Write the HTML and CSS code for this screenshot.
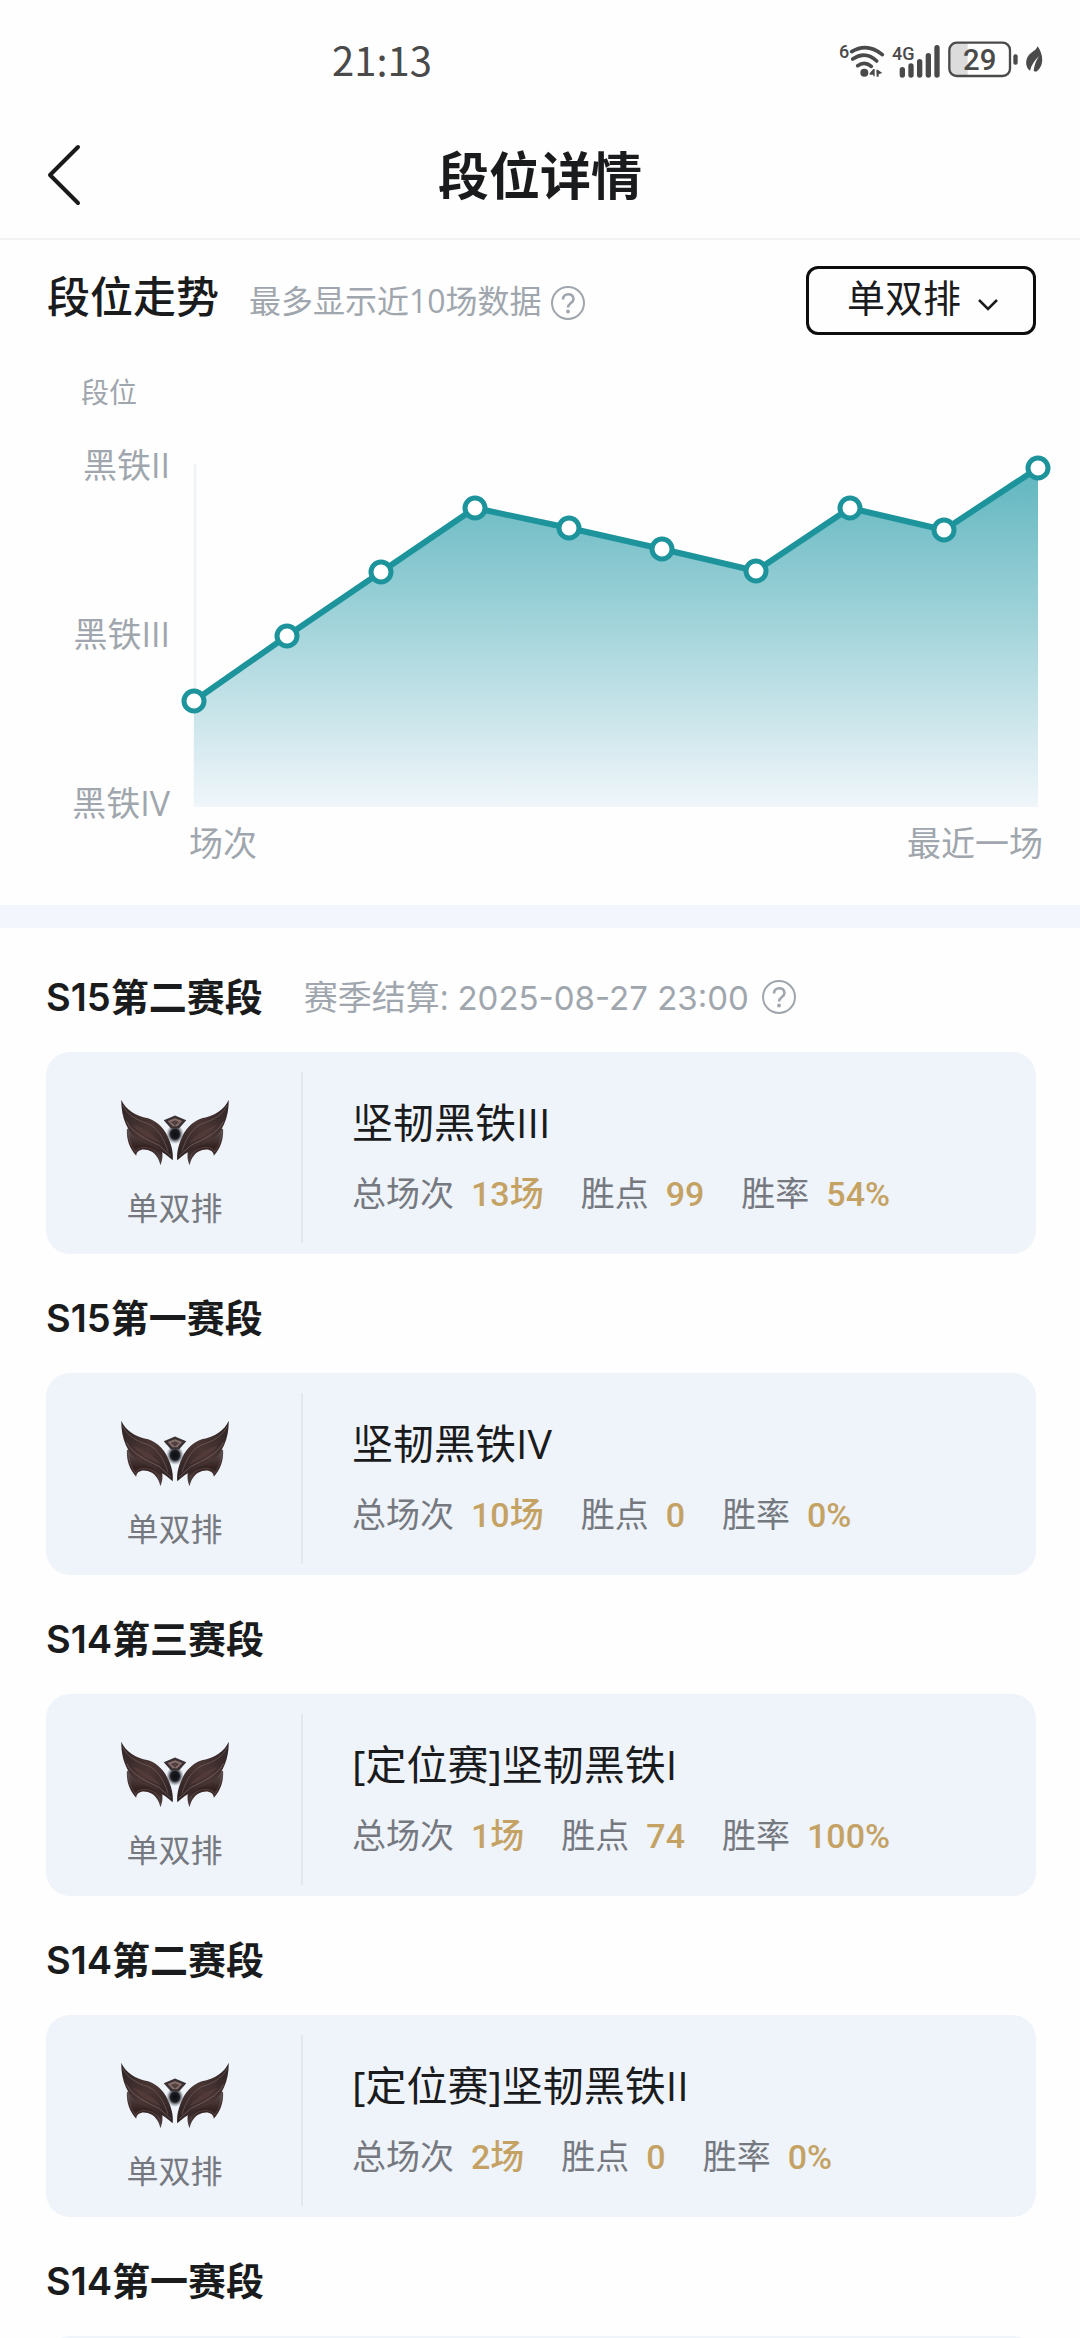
FILE: index.html
```html
<!DOCTYPE html>
<html lang="zh-CN">

<head>
  <meta charset="UTF-8">
  <meta name="viewport" content="width=device-width, initial-scale=1.0">
  <title>段位详情</title>
  <link rel="stylesheet" href="styles.css">
</head>

<body>
  <!-- shared shapes -->
  <svg class="defs" width="0" height="0" aria-hidden="true">
    <defs>
      <linearGradient id="blade" x1="0" y1="0" x2="1" y2="1">
        <stop offset="0" stop-color="#2c2324" />
        <stop offset="0.5" stop-color="#4a3634" />
        <stop offset="1" stop-color="#2b2021" />
      </linearGradient>
      <linearGradient id="feather" x1="0" y1="0" x2="0" y2="1">
        <stop offset="0" stop-color="#5d5152" />
        <stop offset="0.5" stop-color="#33211f" />
        <stop offset="1" stop-color="#54474a" />
      </linearGradient>
      <radialGradient id="core">
        <stop offset="0" stop-color="#0c0d11" />
        <stop offset="0.5" stop-color="#1c1d23" />
        <stop offset="1" stop-color="#8d8f98" stop-opacity="0" />
      </radialGradient>
    </defs>
    <symbol id="wing" viewBox="0 0 450 330" overflow="visible">
      <path d="M79 146C77 180 88 206 107 227C108 211 124 205 142 210C162 216 175 232 180 256C189 236 187 216 182 200L120 150Z" fill="url(#feather)" />
      <path d="M84 158C86 184 94 202 105 216C110 204 126 199 146 204C162 208 172 217 178 230" fill="none" stroke="#81696a" stroke-width="2" opacity="0.6" />
      <path d="M62 58C75 88 104 106 143 114C174 124 196 150 207 180C216 204 219 222 217 241C190 214 152 200 118 182C82 160 61 112 62 58Z" fill="url(#blade)" />
      <path d="M66 74C78 102 108 120 142 130C170 142 190 172 203 214" fill="none" stroke="#7d6764" stroke-width="3" opacity="0.6" />
      <path d="M78 124C96 160 140 178 176 196L212 228" fill="none" stroke="#8a7371" stroke-width="3" opacity="0.6" />
      <path d="M96 134C126 142 154 158 182 190C152 176 122 166 96 134Z" fill="#513a37" />
    </symbol>
    <symbol id="emblem" viewBox="60 56 328 202">
      <use href="#wing" width="450" height="330" />
      <use href="#wing" width="450" height="330" transform="translate(448 0) scale(-1 1)" />
      <ellipse cx="224" cy="162" rx="27" ry="30" fill="url(#core)" />
      <path d="M190 120L224 106L258 120L236 145H212Z" fill="#393132" />
      <path d="M202 122L224 114L246 122L231 138H217Z" fill="#8a706d" />
      <path d="M211 125L224 120L237 125L224 137Z" fill="#514040" />
    </symbol>
    <symbol id="help" viewBox="0 0 36 36">
      <circle cx="18" cy="18" r="16" fill="none" stroke="currentColor" stroke-width="2" />
      <path d="M13 14.500C13 7.500 23.500 7.500 23.500 14C23.500 18 18 18 18 22.500" fill="none" stroke="currentColor" stroke-width="2.600" />
      <circle cx="18" cy="26.500" r="1.900" fill="currentColor" />
    </symbol>
  </svg>

  <div class="page">
    <div class="status_bar">
      <span class="time">21:13</span>
      <div class="status_icons">
        <svg width="46" height="40" viewBox="110 50 138 120">
          <text x="110" y="108" class="status_mini">6</text>
          <g fill="none" stroke="#4a4a4a" stroke-width="11" stroke-linecap="round">
            <path d="M148 88Q195 60 240 97" />
            <path d="M151 110Q189 84 223 116" />
            <path d="M166 130Q187 115 207 132" />
          </g>
          <circle cx="186" cy="151" r="12" fill="#4a4a4a" />
          <path d="M202 153L213 140H217V162H213V157H202ZM222 142H226L240 152L229 156V163H223Z" fill="#4a4a4a" />
        </svg>
        <svg width="49" height="40" viewBox="273 50 147 120">
          <text x="273" y="112" class="status_mini">4G</text>
          <path d="M304 142V158M330 131V158M356 118V158M382 100V158M408 76V158" fill="none" stroke="#4a4a4a" stroke-width="16" stroke-linecap="round" />
        </svg>
        <svg width="71" height="40" viewBox="449 55 213 120">
          <path d="M473 67H508V165H473Q454 165 454 146V86Q454 67 473 67Z" fill="#dcdcdc" />
          <rect x="453" y="66" width="182" height="100" rx="22" fill="none" stroke="#4a4a4a" stroke-width="7" />
          <rect x="645" y="101" width="13" height="31" rx="6" fill="#4a4a4a" />
          <text x="544" y="149" text-anchor="middle" class="status_charge">29</text>
        </svg>
        <svg width="17" height="40" viewBox="676 55 51 120">
          <path d="M711 77C730 104 730 138 706 153L699 151C701 133 706 120 715 107C702 119 693 132 688 150C671 139 673 109 692 96C702 90 708 85 711 77Z" fill="#4a4a4a" />
        </svg>
      </div>
    </div>

    <header class="header">
      <button class="back" type="button" aria-label="返回">
        <svg width="36" height="64" viewBox="0 0 36 64">
          <path d="M32 4L4 32L32 60" fill="none" stroke="#1a1a1a" stroke-width="4" stroke-linecap="round" stroke-linejoin="round" />
        </svg>
      </button>
      <h1>段位详情</h1>
    </header>

    <section class="trend">
      <div class="trend_head">
        <div class="trend_title">
          <h2>段位走势</h2>
          <span class="hint">最多显示近10场数据</span>
          <button class="help" type="button" aria-label="数据说明"><svg width="36" height="36"><use href="#help" /></svg></button>
        </div>
        <div class="queue">
          <select aria-label="队列类型">
            <option>单双排</option>
          </select>
          <svg class="arrow" width="22" height="14" viewBox="0 0 22 14">
            <path d="M2 2L11 11L20 2" fill="none" stroke="#1a1a1a" stroke-width="2.500" />
          </svg>
        </div>
      </div>

      <p class="chart_name">段位</p>
      <div class="chart">
        <div class="y_labels">
          <span>黑铁II</span>
          <span>黑铁III</span>
          <span>黑铁IV</span>
        </div>
        <svg class="plot" viewBox="180 445 872 378">
          <defs>
            <linearGradient id="area" x1="0" y1="0" x2="0" y2="1">
              <stop offset="0" stop-color="#60b6bf" />
              <stop offset="1" stop-color="#f0f6fa" />
            </linearGradient>
          </defs>
          <path d="M195 464V806" stroke="#f1f3f5" stroke-width="3" />
          <path d="M194 701L287 636L381 572L475 508L569 528L662 549L756 571L850 508L944 530L1038 468V807H194Z" fill="url(#area)" />
          <path d="M194 701L287 636L381 572L475 508L569 528L662 549L756 571L850 508L944 530L1038 468" fill="none" stroke="#1d949c" stroke-width="6" />
          <g fill="#fff" stroke="#1d949c" stroke-width="5">
            <circle cx="194" cy="701" r="10" />
            <circle cx="287" cy="636" r="10" />
            <circle cx="381" cy="572" r="10" />
            <circle cx="475" cy="508" r="10" />
            <circle cx="569" cy="528" r="10" />
            <circle cx="662" cy="549" r="10" />
            <circle cx="756" cy="571" r="10" />
            <circle cx="850" cy="508" r="10" />
            <circle cx="944" cy="530" r="10" />
            <circle cx="1038" cy="468" r="10" />
          </g>
        </svg>
      </div>
      <div class="x_labels">
        <span>场次</span>
        <span>最近一场</span>
      </div>
    </section>

    <main class="seasons">
      <section class="season">
        <div class="season_head">
          <h3>S15第二赛段</h3>
          <p class="settle">赛季结算: <time datetime="2025-08-27T23:00">2025-08-27 23:00</time></p>
          <button class="help" type="button" aria-label="结算说明"><svg width="36" height="36"><use href="#help" /></svg></button>
        </div>
        <div class="card">
          <div class="rank">
            <svg width="110" height="67"><use href="#emblem" /></svg>
            <span>单双排</span>
          </div>
          <div class="info">
            <h4>坚韧黑铁III</h4>
            <p class="stats">
              <span>总场次<b>13场</b></span>
              <span>胜点<b>99</b></span>
              <span>胜率<b>54%</b></span>
            </p>
          </div>
        </div>
      </section>

      <section class="season">
        <div class="season_head">
          <h3>S15第一赛段</h3>
        </div>
        <div class="card">
          <div class="rank">
            <svg width="110" height="67"><use href="#emblem" /></svg>
            <span>单双排</span>
          </div>
          <div class="info">
            <h4>坚韧黑铁IV</h4>
            <p class="stats">
              <span>总场次<b>10场</b></span>
              <span>胜点<b>0</b></span>
              <span>胜率<b>0%</b></span>
            </p>
          </div>
        </div>
      </section>

      <section class="season">
        <div class="season_head">
          <h3>S14第三赛段</h3>
        </div>
        <div class="card">
          <div class="rank">
            <svg width="110" height="67"><use href="#emblem" /></svg>
            <span>单双排</span>
          </div>
          <div class="info">
            <h4>[定位赛]坚韧黑铁I</h4>
            <p class="stats">
              <span>总场次<b>1场</b></span>
              <span>胜点<b>74</b></span>
              <span>胜率<b>100%</b></span>
            </p>
          </div>
        </div>
      </section>

      <section class="season">
        <div class="season_head">
          <h3>S14第二赛段</h3>
        </div>
        <div class="card">
          <div class="rank">
            <svg width="110" height="67"><use href="#emblem" /></svg>
            <span>单双排</span>
          </div>
          <div class="info">
            <h4>[定位赛]坚韧黑铁II</h4>
            <p class="stats">
              <span>总场次<b>2场</b></span>
              <span>胜点<b>0</b></span>
              <span>胜率<b>0%</b></span>
            </p>
          </div>
        </div>
      </section>

      <section class="season">
        <div class="season_head">
          <h3>S14第一赛段</h3>
        </div>
        <div class="card"></div>
      </section>
    </main>
  </div>
</body>

</html>
```
FILE: styles.css
```css
* {
  margin: 0;
  padding: 0;
  box-sizing: border-box;
}

body {
  background: #fefefe;
  color: #1a1b1d;
  font-family: "Open Sans", "Noto Sans CJK SC", sans-serif;
  font-size: 34px;
  line-height: 40px;
}

button {
  border: none;
  background: none;
  cursor: pointer;
}

svg {
  display: block;
}

.defs {
  position: absolute;
}

.page {
  height: 100vh;
  overflow: hidden;
}

/* status bar */
.status_bar {
  display: flex;
  justify-content: space-between;
  align-items: center;
  height: 111px;
  padding: 6px 37px 0 332px;
  color: #4a4a4a;
}

.time {
  font-family: "Noto Sans CJK SC", sans-serif;
  font-size: 40px;
}

.status_icons {
  display: flex;
  align-items: center;
  gap: 7px;
}

.status_mini {
  font-family: Roboto, sans-serif;
  font-size: 54px;
  font-weight: 500;
  fill: #4a4a4a;
}

.status_charge {
  font-family: Roboto, sans-serif;
  font-size: 88px;
  font-weight: 500;
  fill: #4a4a4a;
}

/* title bar */
.header {
  display: grid;
  grid-template-columns: 1fr auto 1fr;
  align-items: center;
  height: 129px;
  padding: 0 46px;
  border-bottom: 2px solid #f1f2f3;
}

.header h1 {
  font-size: 51px;
  line-height: 60px;
}

.back {
  justify-self: start;
}

/* trend */
.trend {
  padding-bottom: 42px;
  border-bottom: 23px solid #f3f6fd;
  color: #a0a6ad;
}

.trend_head {
  display: flex;
  justify-content: space-between;
  align-items: center;
  padding: 26px 44px 0 47px;
}

.trend_title {
  display: flex;
  align-items: baseline;
  padding-bottom: 4px;
}

.trend_title h2 {
  color: #1a1b1d;
  font-size: 43px;
  font-weight: 500;
}

.hint {
  margin: 0 8px 0 30px;
  font-size: 32px;
}

.help {
  align-self: flex-end;
  color: #a0a6ad;
}

.queue {
  position: relative;
}

.queue select {
  appearance: none;
  width: 230px;
  height: 69px;
  padding: 0 38px 8px;
  border: 3px solid #0c0d0e;
  border-radius: 12px;
  background: #fefefe;
  color: #1a1b1d;
  font-family: inherit;
  font-size: 38px;
}

.arrow {
  position: absolute;
  top: 32px;
  right: 37px;
  pointer-events: none;
}

.chart_name {
  margin: 37px 0 33px 81px;
  font-size: 28px;
}

.chart {
  display: grid;
  grid-template-columns: 170px 1fr;
  gap: 10px;
  padding-right: 28px;
}

.y_labels {
  display: flex;
  flex-direction: column;
  justify-content: space-between;
  text-align: right;
}

.plot {
  width: 100%;
}

.x_labels {
  display: flex;
  justify-content: space-between;
  padding: 0 37px 0 189px;
}

/* seasons */
.seasons {
  padding: 5px 44px 0 46px;
}

.season_head {
  display: flex;
  align-items: center;
  height: 119px;
  padding-top: 9px;
}

.season_head h3 {
  font-family: Inter, "Noto Sans CJK SC", sans-serif;
  font-size: 38px;
  font-weight: 600;
}

.season_head .help {
  align-self: center;
}

.settle {
  margin: 0 12px 0 41px;
  color: #a0a6ad;
}

.settle time {
  font-family: Inter, sans-serif;
  font-size: 33px;
}

.card {
  display: flex;
  height: 202px;
  border-radius: 24px;
  background: #eff3fa;
}

.rank {
  display: flex;
  flex-direction: column;
  align-items: center;
  gap: 22px;
  width: 257px;
  height: 171px;
  margin-top: 20px;
  padding: 27px 0 0 2px;
  border-right: 2px solid #e3e8ef;
  color: #75797f;
  font-size: 32px;
}

.info {
  padding: 48px 0 0 49px;
}

.info h4 {
  margin-bottom: 29px;
  font-size: 41px;
  font-weight: 400;
  line-height: 44px;
}

.stats {
  display: flex;
  gap: 37px;
  color: #75797f;
}

.stats b {
  margin-left: 17px;
  color: #c4a264;
  font-family: Roboto, "Noto Sans CJK SC", sans-serif;
  font-weight: 500;
}
```
